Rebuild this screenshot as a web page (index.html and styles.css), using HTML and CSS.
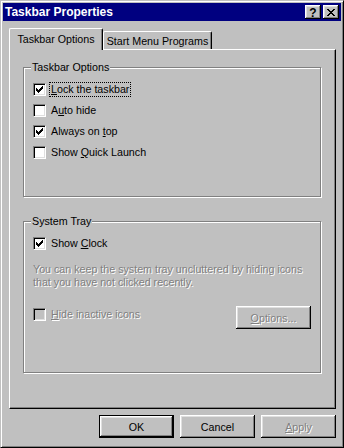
FILE: index.html
```html
<!DOCTYPE html>
<html lang="en">
<head>
    <meta charset="UTF-8">
    <meta name="viewport" content="width=device-width, initial-scale=1.0">
    <title>Taskbar Properties</title>
    <link rel="stylesheet" href="styles.css">
</head>
<body>

    <div class="window">
        <div class="titlebar">
            <span class="title">Taskbar Properties</span>
            <div class="title-btns">
                <button class="tbtn help">?</button>
                <button class="tbtn">
                    <svg width="8" height="7" viewBox="0 0 8 7" shape-rendering="crispEdges">
                        <path d="M0 0h2v1H0zM6 0h2v1H6zM1 1h2v1H1zM5 1h2v1H5zM2 2h4v1H2zM3 3h2v1H3zM2 4h4v1H2zM1 5h2v1H1zM5 5h2v1H5zM0 6h2v1H0zM6 6h2v1H6z" fill="#000"/>
                    </svg>
                </button>
            </div>
        </div>

        <div class="dialog">
            <div class="tabs">
                <div class="tab active">Taskbar Options</div>
                <div class="tab">Start Menu Programs</div>
            </div>

            <div class="panel">
                <div class="group group-options">
                    <span class="legend">Taskbar Options</span>
                    <label class="check">
                        <span class="box"><svg width="7" height="7" viewBox="0 0 7 7" shape-rendering="crispEdges"><path d="M0 2h1v3H0zM1 3h1v3H1zM2 4h1v3H2zM3 3h1v3H3zM4 2h1v3H4zM5 1h1v3H5zM6 0h1v3H6z" fill="#000"/></svg></span>
                        <span class="text focus"><u>L</u>ock the taskbar</span>
                    </label>
                    <label class="check">
                        <span class="box"></span>
                        <span class="text">A<u>u</u>to hide</span>
                    </label>
                    <label class="check">
                        <span class="box"><svg width="7" height="7" viewBox="0 0 7 7" shape-rendering="crispEdges"><path d="M0 2h1v3H0zM1 3h1v3H1zM2 4h1v3H2zM3 3h1v3H3zM4 2h1v3H4zM5 1h1v3H5zM6 0h1v3H6z" fill="#000"/></svg></span>
                        <span class="text">Always on <u>t</u>op</span>
                    </label>
                    <label class="check">
                        <span class="box"></span>
                        <span class="text">Show <u>Q</u>uick Launch</span>
                    </label>
                </div>

                <div class="group group-tray">
                    <span class="legend">System Tray</span>
                    <label class="check">
                        <span class="box"><svg width="7" height="7" viewBox="0 0 7 7" shape-rendering="crispEdges"><path d="M0 2h1v3H0zM1 3h1v3H1zM2 4h1v3H2zM3 3h1v3H3zM4 2h1v3H4zM5 1h1v3H5zM6 0h1v3H6z" fill="#000"/></svg></span>
                        <span class="text">Show <u>C</u>lock</span>
                    </label>
                    <p class="note disabled">You can keep the system tray uncluttered by hiding icons<br>that you have not clicked recently.</p>
                    <div class="tray-row">
                        <label class="check">
                            <span class="box off"></span>
                            <span class="text disabled"><u>H</u>ide inactive icons</span>
                        </label>
                        <button class="btn disabled"><u>O</u>ptions...</button>
                    </div>
                </div>
            </div>

            <div class="buttons">
                <button class="btn default">OK</button>
                <button class="btn">Cancel</button>
                <button class="btn disabled"><u>A</u>pply</button>
            </div>
        </div>
    </div>

</body>
</html>
```

FILE: styles.css
```css
* {
    box-sizing: border-box;
}
body {
    margin: 0;
    font-family: "Liberation Sans", Arial, sans-serif;
    font-size: 10.7px;
    color: #000;
    background: #c0c0c0;
}
.window {
    width: 344px;
    height: 448px;
    background: #c0c0c0;
    border: 1px solid;
    border-color: #c0c0c0 #000 #000 #c0c0c0;
    box-shadow: inset 1px 1px #fff, inset -1px -1px #808080;
    padding: 2px;
    display: flex;
    flex-direction: column;
}
.titlebar {
    height: 18px;
    background: #000080;
    color: #fff;
    display: flex;
    align-items: center;
    justify-content: space-between;
    padding: 0 2px;
}
.title {
    font-weight: bold;
    font-size: 12px;
}
.title-btns {
    display: flex;
    gap: 2px;
}
.tbtn {
    width: 16px;
    height: 14px;
    padding: 0;
    border: none;
    background: #c0c0c0;
    box-shadow: inset -1px -1px #000, inset 1px 1px #fff, inset -2px -2px #808080, inset 2px 2px #dfdfdf;
    display: flex;
    align-items: center;
    justify-content: center;
}
.tbtn.help {
    font-family: "Liberation Sans", Arial, sans-serif;
    font-weight: bold;
    font-size: 12px;
    line-height: 12px;
    padding-top: 1px;
}
.dialog {
    flex: 1;
    padding: 7px 5px 0 6px;
    display: flex;
    flex-direction: column;
}
.tabs {
    display: flex;
    align-items: flex-end;
    height: 21px;
    position: relative;
    z-index: 1;
}
.tab {
    height: 18px;
    border: 1px solid;
    border-color: #fff #000 transparent #fff;
    border-bottom: none;
    border-radius: 2px 2px 0 0;
    box-shadow: inset -1px 0 #808080;
    background: #c0c0c0;
    display: flex;
    align-items: center;
    justify-content: center;
    width: 109px;
    padding-top: 1px;
}
.tab.active {
    width: 94px;
    height: 22px;
    margin-bottom: -1px;
    padding-top: 0;
    padding-bottom: 1px;
}
.panel {
    height: 360px;
    border: 1px solid;
    border-color: #fff #000 #000 #fff;
    box-shadow: inset -1px -1px #808080;
    padding: 17px 14px 0 13px;
    display: flex;
    flex-direction: column;
}
.group {
    position: relative;
    border: 1px solid #808080;
    box-shadow: inset 1px 1px #fff, 1px 1px #fff;
    padding-left: 9px;
}
.group-options {
    height: 130px;
    padding-top: 11px;
    margin-bottom: 24px;
}
.group-tray {
    height: 152px;
    padding-top: 11px;
    padding-right: 9px;
}
.legend {
    position: absolute;
    top: -7px;
    left: 7px;
    padding: 0 1px;
    line-height: 13px;
    background: #c0c0c0;
}
.check {
    display: flex;
    align-items: center;
    height: 21px;
}
.box {
    width: 13px;
    height: 13px;
    border: 1px solid;
    border-color: #808080 #fff #fff #808080;
    box-shadow: inset 1px 1px #000, inset -1px -1px #dfdfdf;
    background: #fff;
    padding: 2px 0 0 2px;
    display: flex;
    flex-shrink: 0;
}
.box.off {
    background: #c0c0c0;
}
.text {
    margin-left: 4px;
    padding: 0 1px;
    line-height: 13px;
}
.focus {
    outline: 1px dotted #000;
}
.disabled {
    color: #808080;
    text-shadow: 1px 1px #fff;
}
.note {
    margin: 9px 0 0;
    line-height: 13px;
}
.tray-row {
    display: flex;
    justify-content: space-between;
    align-items: flex-start;
    margin-top: 15px;
}
.tray-row .btn {
    margin-top: 2px;
}
.btn {
    width: 75px;
    height: 23px;
    padding: 0;
    border: none;
    background: #c0c0c0;
    font-family: inherit;
    font-size: 10.7px;
    color: #000;
    box-shadow: inset -1px -1px #000, inset 1px 1px #fff, inset -2px -2px #808080, inset 2px 2px #dfdfdf;
}
.btn.disabled {
    color: #808080;
}
.btn.default {
    border: 1px solid #000;
}
.buttons {
    display: flex;
    justify-content: flex-end;
    gap: 6px;
    margin-top: 6px;
}
```
